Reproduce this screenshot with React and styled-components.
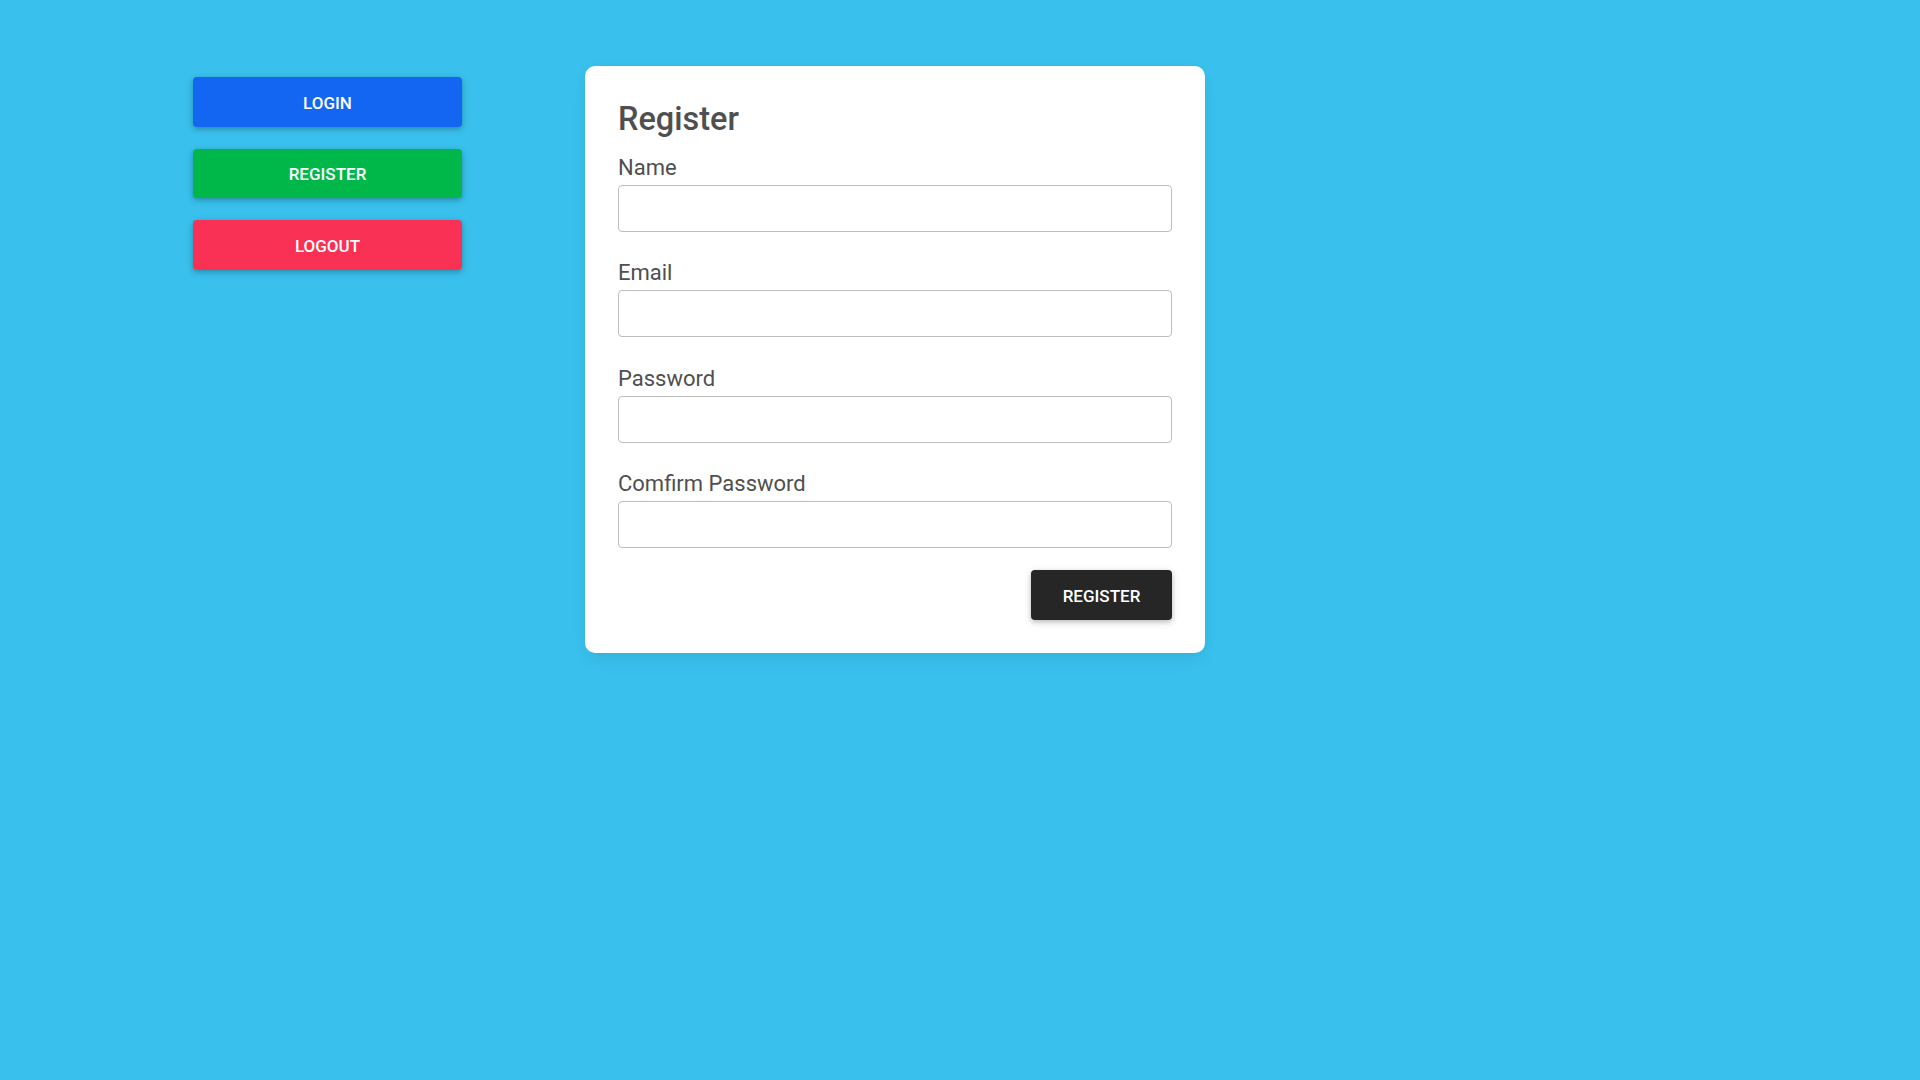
import React from 'react';
import styled, { createGlobalStyle } from 'styled-components';

const GlobalStyle = createGlobalStyle`
  html, body {
    margin: 0;
    padding: 0;
    background-color: #39c0ed;
    font-family: Roboto, 'Liberation Sans', sans-serif;
    color: #4f4f4f;
  }
`;

const Page = styled.div`
  display: flex;
  align-items: flex-start;
  gap: 123px;
  min-height: 1080px;
  box-sizing: border-box;
  padding: 66px 0 0 193px;
`;

const Nav = styled.nav`
  display: flex;
  flex-direction: column;
  gap: 22px;
  width: 269px;
  padding-top: 11px;
`;

const colors = {
  primary: '#1266f1',
  success: '#00b74a',
  danger: '#f93154',
  dark: '#262626'
};

const Button = styled.button`
  display: flex;
  align-items: center;
  justify-content: center;
  box-sizing: border-box;
  height: ${p => p.$height || '49.5px'};
  width: ${p => p.$width || '100%'};
  padding: 2px 0 0;
  border: 0;
  border-radius: 4px;
  background-color: ${p => colors[p.$variant]};
  color: #fff;
  font-family: Roboto, 'Liberation Sans', sans-serif;
  font-size: 17px;
  font-weight: 500;
  text-transform: uppercase;
  cursor: pointer;
  box-shadow: 0 2px 5px 0 rgba(0, 0, 0, 0.2), 0 2px 10px 0 rgba(0, 0, 0, 0.1);
`;

const Card = styled.div`
  width: 620px;
  box-sizing: border-box;
  padding: 33px;
  background-color: #fff;
  border-radius: 10px;
  box-shadow: 0 2px 15px -3px rgba(0, 0, 0, 0.07),
    0 10px 20px -2px rgba(0, 0, 0, 0.04);
`;

const Title = styled.h3`
  margin: 0 0 10px;
  padding-top: 1px;
  font-size: 32.5px;
  font-weight: 500;
  line-height: 1.2;
  color: #4f4f4f;
`;

const Field = styled.div`
  margin-bottom: 22.3px;
`;

/* label text sits a little lower in its line than the default */
const Label = styled.label`
  display: block;
  font-size: 22px;
  line-height: 33px;
  padding-top: 2px;
  margin-bottom: 1px;
  color: #4f4f4f;
`;

const Input = styled.input`
  display: block;
  width: 100%;
  height: 47px;
  box-sizing: border-box;
  border: 1px solid #bdbdbd;
  border-radius: 4px;
  padding: 0 12px;
  font-family: Roboto, 'Liberation Sans', sans-serif;
  font-size: 18px;
  color: #4f4f4f;
  outline: none;
`;

const Actions = styled.div`
  display: flex;
  justify-content: flex-end;
`;

const fields = [
  { id: 'name', label: 'Name', type: 'text' },
  { id: 'email', label: 'Email', type: 'email' },
  { id: 'password', label: 'Password', type: 'password' },
  { id: 'confirm', label: 'Comfirm Password', type: 'password' }
];

export default function App() {
  return (
    <>
      <GlobalStyle />
      <Page>
        <Nav>
          <Button $variant="primary">Login</Button>
          <Button $variant="success">Register</Button>
          <Button $variant="danger">Logout</Button>
        </Nav>
        <Card>
          <Title>Register</Title>
          <form onSubmit={e => e.preventDefault()}>
            {fields.map(f => (
              <Field key={f.id}>
                <Label htmlFor={f.id}>{f.label}</Label>
                <Input id={f.id} type={f.type} />
              </Field>
            ))}
            <Actions>
              <Button $variant="dark" $width="141px" $height="50px" type="submit">
                Register
              </Button>
            </Actions>
          </form>
        </Card>
      </Page>
    </>
  );
}
